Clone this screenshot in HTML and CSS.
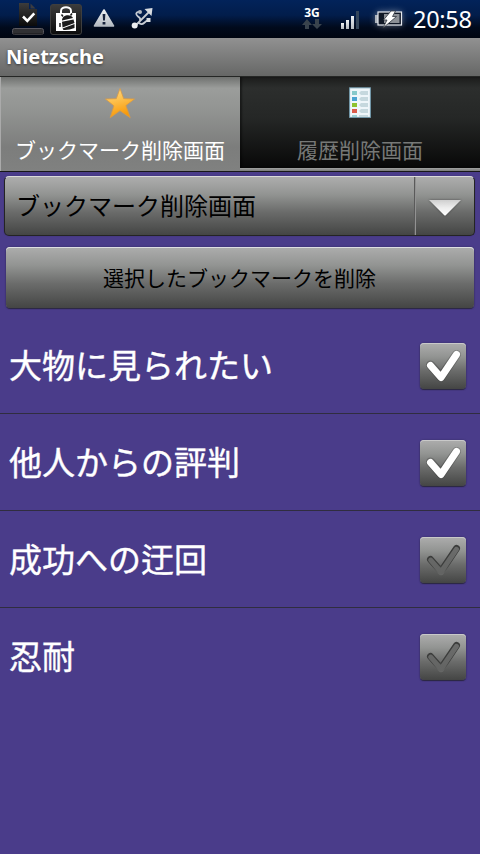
FILE: index.html
```html
<!DOCTYPE html>
<html lang="ja">
<head>
<meta charset="utf-8">
<title>Nietzsche</title>
<link rel="stylesheet" href="styles.css">
</head>
<body>
<svg class="defs" width="0" height="0" aria-hidden="true">
  <defs>
    <linearGradient id="silver" x1="0" y1="0" x2="0" y2="1"><stop offset="0" stop-color="#eef1f4"/><stop offset="1" stop-color="#b4bac1"/></linearGradient>
    <linearGradient id="black" x1="0" y1="0" x2="0" y2="1"><stop offset="0" stop-color="#3c3c3c"/><stop offset="1" stop-color="#0b0b0b"/></linearGradient>
    <linearGradient id="gold" x1="0" y1="0" x2="0.3" y2="1"><stop offset="0" stop-color="#ffd98a"/><stop offset="0.45" stop-color="#fdc250"/><stop offset="1" stop-color="#f99a08"/></linearGradient>
    <linearGradient id="arrow" x1="0" y1="0" x2="0" y2="1"><stop offset="0" stop-color="#cfcfcf"/><stop offset="0.5" stop-color="#ededed"/><stop offset="1" stop-color="#fff"/></linearGradient>
    <linearGradient id="groove" gradientUnits="userSpaceOnUse" x1="0" y1="8" x2="0" y2="38"><stop offset="0" stop-color="#6c6d6c"/><stop offset="1" stop-color="#626362"/></linearGradient>
    <linearGradient id="grooveEdge" gradientUnits="userSpaceOnUse" x1="0" y1="8" x2="0" y2="39"><stop offset="0" stop-color="#3c3d3c"/><stop offset="0.65" stop-color="#3c3d3c"/><stop offset="1" stop-color="#707170"/></linearGradient>
  </defs>
</svg>

<header class="status">
  <div class="notices">
    <svg width="34" height="36" viewBox="0 0 34 36">
      <path d="M8 3h10v6h8v17H8z" fill="url(#black)"/>
      <path d="M19.500 3.500l5 5h-5z" fill="#3c3c40"/>
      <path d="M12 16.500l4.300 4.300 7-7.500" fill="none" stroke="#fff" stroke-width="2.600"/>
      <rect x="1.500" y="28.500" width="31" height="6" rx="2" fill="#303033" stroke="#5b5960"/>
      <path d="M2 34h30" stroke="#151519"/>
    </svg>
    <svg class="market" width="32" height="36" viewBox="0 0 32 36">
      <rect x=".5" y="4.500" width="31" height="30" rx="2.500" fill="url(#black)" stroke="#3e3e3e"/>
      <path d="M11 14v-3c0-5 10-5 10 0v3" fill="none" stroke="#fff" stroke-width="2"/>
      <path d="M6 13h20v18H6z" fill="#fff"/>
      <path d="M12 20.500c0-6 9-7 11-2.500zM12 21.800l11.500-2.300 1 3.500-12 4.500zM12.500 28.500l12-4.500v4q-6 2.500-11 2z" fill="#1c1c1c"/>
      <path d="M13 16.500l-1.500-2m9 1l1.500-2M10 23v4" stroke="#1c1c1c" stroke-width="1.500"/>
    </svg>
    <svg class="warn" width="22" height="20" viewBox="0 0 22 20">
      <path d="M11 2L20.500 18H1.500z" fill="url(#silver)" stroke="url(#silver)" stroke-width="1.600" stroke-linejoin="round"/>
      <path d="M9.600 6h2.800l-.5 6.500h-1.800zM9.600 14h2.800v2.500H9.600z" fill="#17223b"/>
    </svg>
    <svg class="usb" width="24" height="24" viewBox="0 0 24 24" fill="none" stroke="#c7ccd3" stroke-width="1.800">
      <path d="M3.500 18.500L19 3M9 13Q10 10 7 8.500Q3 5 8 3.500M7.500 14.500q3 3 5.500.5t4-2.500"/>
      <path d="M13.500 1l8-1-1 8z" fill="#d8dce1" stroke="none"/>
      <circle cx="3.700" cy="17.500" r="3" fill="#eceef0" stroke="none"/>
      <circle cx="9" cy="4" r="2" fill="#b4bac2" stroke="none"/>
      <path d="M15.500 10h4v4h-4z" fill="#d8dce1" stroke="none"/>
    </svg>
  </div>
  <div class="signals">
    <div class="net"><span>3G</span>
      <svg width="20" height="11" viewBox="0 0 20 11" fill="#39434d"><path d="M5 0l5 6H7v4H3V6H0zM15 10L10 5h3V0h4v5h3z"/></svg>
    </div>
    <svg class="bars" width="19" height="18" viewBox="0 0 19 18"><g fill="url(#silver)"><path d="M1 12h3v6H1z"/><path d="M6 9h3v9H6z"/><path d="M11 5h3v13h-3z"/></g><path d="M16 0h3v18h-3z" fill="#34465b"/></svg>
    <svg class="battery" width="28" height="20" viewBox="0 0 28 20">
      <path d="M0 6h3v8H0z" fill="#aeb4bc"/>
      <rect x="3" y="3" width="23.500" height="13" fill="#101826" stroke="#e6e9ee" stroke-width="1.200"/>
      <path d="M9 5h15.500v9H9z" fill="#8c9096"/>
      <path d="M16 2h4.500l-3 5.500h4L8 19l4-8H8.500z" fill="#fff" stroke="#30363f" stroke-width=".8"/>
    </svg>
    <span class="clock">20:58</span>
  </div>
</header>

<h1 class="title">Nietzsche</h1>

<nav class="tabs">
  <div class="tab selected">
    <svg width="32" height="32" viewBox="0 0 32 32"><path d="M16 1.500l3.700 10.200 10.800.3-8.600 6.500 4.300 12.200L16 23.700 6.200 30.700l3.700-11.900L1.500 12l10.800-.3z" fill="url(#gold)" stroke="#d99a45" stroke-width=".8" stroke-linejoin="round"/></svg>
    <span>ブックマーク削除画面</span>
  </div>
  <div class="tab">
    <svg width="32" height="32" viewBox="0 0 32 32">
      <rect x="5.600" y=".8" width="20.800" height="29.600" fill="#eef6fa" stroke="#729aac"/>
      <path d="M8 4h5v4H8z" fill="#86c9cb"/><path d="M8 10h5v4H8z" fill="#4ba3d1"/><path d="M8 16h5v4H8z" fill="#8dc22f"/><path d="M8 22h5v4H8z" fill="#d95c4b"/><path d="M8 28h5v2H8z" fill="#9bd0d3"/>
      <path d="M15 6l2-2h7v4h-7zM15 12l2-2h7v4h-7zM15 18l2-2h7v4h-7zM15 24l2-2h7v4h-7zM15 28h9v2h-9z" fill="#c5d8de"/>
    </svg>
    <span>履歴削除画面</span>
  </div>
</nav>

<main>
  <div class="spinner">
    <span class="choice">ブックマーク削除画面</span>
    <span class="drop"><svg width="34" height="18" viewBox="0 0 34 18"><path d="M1 1h32L18 16q-1 1-2 0z" fill="url(#arrow)"/></svg></span>
  </div>
  <button class="delete">選択したブックマークを削除</button>
  <ul class="list">
    <li><span>大物に見られたい</span><svg class="check" width="46" height="46" viewBox="0 0 46 46"><path class="shade" d="M10.500 22L21 34 36.500 11.500"/><path class="on" d="M10.500 22.500L21 34.500 36.500 11.500"/></svg></li>
    <li><span>他人からの評判</span><svg class="check" width="46" height="46" viewBox="0 0 46 46"><path class="shade" d="M10.500 22L21 34 36.500 11.500"/><path class="on" d="M10.500 22.500L21 34.500 36.500 11.500"/></svg></li>
    <li><span>成功への迂回</span><svg class="check" width="46" height="46" viewBox="0 0 46 46"><path class="edge" d="M10.500 22.500L21 34.500 36.500 11.500"/><path class="off" d="M10.700 23.200L21 35 36.400 12.300"/></svg></li>
    <li><span>忍耐</span><svg class="check" width="46" height="46" viewBox="0 0 46 46"><path class="edge" d="M10.500 22.500L21 34.500 36.500 11.500"/><path class="off" d="M10.700 23.200L21 35 36.400 12.300"/></svg></li>
  </ul>
</main>
</body>
</html>
```
FILE: styles.css
```css
* { box-sizing: border-box; }
body {
  margin: 0;
  min-height: 854px;
  background: #4a3c8a;
  font-family: "Noto Sans", "Noto Sans CJK JP", sans-serif;
  overflow: hidden;
}
.defs { display: block; }
svg { display: block; flex: none; }

.status {
  display: flex;
  justify-content: space-between;
  height: 38px;
  background: linear-gradient(#02235a, #021d4b 40%, #010a1c 72%, #000510);
  color: #fff;
}
.notices { display: flex; padding-left: 11px; }
.market { margin-left: 5px; }
.warn { margin: 8px 0 0 11px; }
.usb { margin: 8px 0 0 16px; }
.signals { display: flex; padding-right: 10px; }
.net {
  display: flex;
  flex-direction: column;
  align-items: center;
  margin: 7px 18px 0 0;
  font-size: 12px;
  font-weight: 700;
  line-height: 12px;
}
.bars { margin-top: 11px; }
.battery { margin: 9px 10px 0 16px; filter: drop-shadow(0 0 3px #ffffff60); }
.clock { font-size: 23.500px; line-height: 39px; width: 57px; letter-spacing: -0.3px; white-space: nowrap; }

.title {
  margin: 0;
  height: 39px;
  padding-left: 6px;
  border-bottom: 1px solid #252725;
  background: linear-gradient(#919191, #666766);
  color: #fff;
  font-size: 20px;
  line-height: 37px;
  text-shadow: 0 1px 3px #0008;
}

.tabs {
  display: flex;
  height: 95px;
  padding-bottom: 4px;
  background: linear-gradient(#858685 91px, #a2a3a2 91px, #777877 94px, #171717 94px);
}
.tab {
  display: flex;
  flex: 1;
  flex-direction: column;
  align-items: center;
  padding-top: 10px;
  background: linear-gradient(#1b1c1b, #2c2e2d 12%, #252726 45%, #080808);
  box-shadow: inset 2px 0 2px #0006;
  color: #777977;
  font-size: 21px;
  line-height: 30px;
}
.tab span { margin-top: 16px; white-space: nowrap; }
.tab.selected {
  height: 94px;
  background: linear-gradient(#6f716f, #9b9d9b 12%, #929492 35%, #7c7d7c 75%, #808180);
  box-shadow: inset 1px 0 #aaa;
  color: #fff;
}

.spinner, .delete, .check {
  background: linear-gradient(#adadad, #929492 30%, #6b6c6b 60%, #444544);
}
.spinner {
  display: flex;
  height: 60px;
  margin: 4px 5px 0 4px;
  border: 1px solid #242424;
  border-top-color: #dadada;
  border-radius: 5px;
  box-shadow: 0 0 1px #30265f;
  color: #000;
}
.choice { flex: 1; padding-left: 11px; font-size: 24px; line-height: 58px; white-space: nowrap; }
.drop {
  display: flex;
  align-items: center;
  justify-content: center;
  width: 59px;
  padding-top: 3px;
  border-left: 1px solid #929292;
  box-shadow: -1px 0 #5a5a5a;
}
.drop svg { filter: drop-shadow(0 0 1px #0006); }
.delete {
  display: block;
  width: 468px;
  height: 61px;
  margin: 11px 6px 9px;
  padding: 0 1px 1px 0;
  border: 0;
  border-radius: 4px;
  box-shadow: inset 0 1px #dedee2, 0 1px 1px #2b2740, 0 0 2px #342b60;
  color: #000;
  font: 21px "Noto Sans CJK JP", sans-serif;
}

.list { margin: 0; padding: 0; list-style: none; }
.list li {
  display: flex;
  align-items: center;
  justify-content: space-between;
  height: 97px;
  padding: 2px 14px 0 9px;
  border-bottom: 1px solid #302d3f;
  color: #fff;
  font-size: 33px;
}
.list li:last-child { border-bottom-color: transparent; }
.list span { line-height: 48px; font-weight: 400; -webkit-text-stroke: 0.4px #fff; }
.check {
  border-radius: 4px;
  box-shadow: inset 0 1px #c9c9c9, 0 1px 1px #2b2740, 0 0 2px #342b60;
}
.check path { fill: none; stroke-linecap: round; stroke-linejoin: round; stroke-width: 7; }
.check .shade { stroke: #0003; stroke-width: 9; }
.check .on { stroke: #fff; }
.check .edge { stroke: url(#grooveEdge); }
.check .off { stroke: url(#groove); stroke-width: 5; }
```
